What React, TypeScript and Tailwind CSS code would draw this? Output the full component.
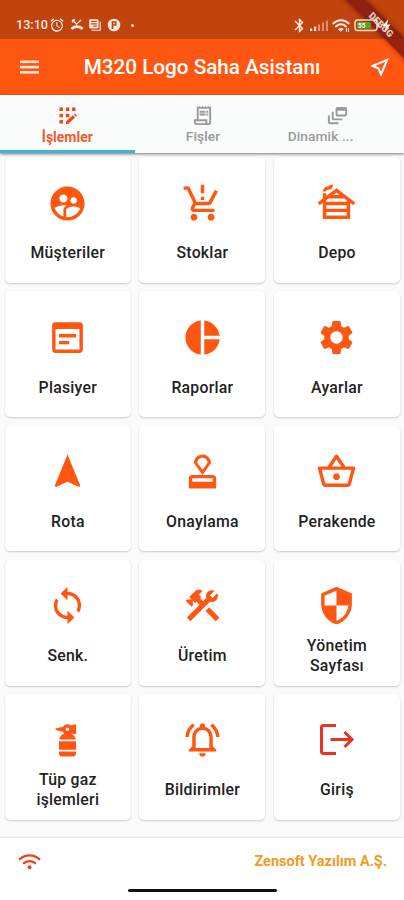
import React, { ReactNode } from 'react';
import {
  MdSupervisedUserCircle,
  MdProductionQuantityLimits,
  MdOutlineCabin,
  MdWysiwyg,
  MdPieChart,
  MdSettings,
  MdNavigation,
  MdOutlineApproval,
  MdOutlineShoppingBasket,
  MdLoop,
  MdConstruction,
  MdSecurity,
  MdFireExtinguisher,
  MdOutlineNotificationsActive,
  MdOutlineReceiptLong,
  MdOutlineDynamicFeed,
  MdOutlineNearMe,
  MdAlarm,
  MdLibraryBooks,
  MdBluetooth,
} from 'react-icons/md';

const ITEMS: { label: string; icon: ReactNode }[] = [
  { label: 'Müşteriler', icon: <MdSupervisedUserCircle size={41} /> },
  { label: 'Stoklar', icon: <MdProductionQuantityLimits size={41} /> },
  { label: 'Depo', icon: <MdOutlineCabin size={41} /> },
  { label: 'Plasiyer', icon: <MdWysiwyg size={41} /> },
  { label: 'Raporlar', icon: <MdPieChart size={41} /> },
  { label: 'Ayarlar', icon: <MdSettings size={41} /> },
  { label: 'Rota', icon: <MdNavigation size={41} /> },
  { label: 'Onaylama', icon: <MdOutlineApproval size={41} /> },
  { label: 'Perakende', icon: <MdOutlineShoppingBasket size={41} /> },
  { label: 'Senk.', icon: <MdLoop size={41} /> },
  { label: 'Üretim', icon: <MdConstruction size={41} /> },
  { label: 'Yönetim Sayfası', icon: <MdSecurity size={41} /> },
  { label: 'Tüp gaz işlemleri', icon: <MdFireExtinguisher size={41} /> },
  { label: 'Bildirimler', icon: <MdOutlineNotificationsActive size={41} /> },
  { label: 'Giriş', icon: <ExitIcon /> },
];

export default function App() {
  return (
    <div className="relative w-[404px] h-[900px] flex flex-col overflow-hidden bg-[#fafafa] font-['Roboto',sans-serif]">
      <StatusBar />

      <header className="h-14 shrink-0 flex items-center bg-[#ff5611] text-white">
        <svg className="ml-5" width="19" height="14" viewBox="0 0 19 14" fill="#ffe3d6">
          <rect y="0.500" width="19" height="2.600" />
          <rect y="5.800" width="19" height="2.600" />
          <rect y="11" width="19" height="2.600" />
        </svg>
        <h1 className="flex-1 pr-[3px] pt-px text-center text-[20.7px] font-medium leading-none">M320 Logo Saha Asistanı</h1>
        <MdOutlineNearMe size={24} className="mr-3" />
      </header>

      <nav className="relative z-10 h-[58px] shrink-0 grid grid-cols-3 bg-[#fafbfb] shadow-[0_1px_3px_rgba(0,0,0,0.55)]">
        <Tab label="İşlemler" icon={<GridEditIcon />} active />
        <Tab label="Fişler" icon={<MdOutlineReceiptLong size={23} />} />
        <Tab label="Dinamik ..." icon={<MdOutlineDynamicFeed size={23} />} clipped />
      </nav>

      <main className="flex-1 grid grid-cols-3 auto-rows-[126px] content-start gap-x-[8.5px] gap-y-[8.2px] pl-[4.8px] pr-[4px] pt-1">
        {ITEMS.map((item) => (
          <button
            key={item.label}
            className="flex flex-col items-center rounded-[5px] bg-white pt-[25.7px] text-[#ff5611] shadow-[0_1px_2px_rgba(0,0,0,0.2)]"
          >
            {item.icon}
            <span className="mt-[4.5px] h-[50px] w-[86px] flex items-center justify-center text-center text-[15.8px] font-medium leading-[19.5px] tracking-[0.25px] text-[#222]">
              {item.label}
            </span>
          </button>
        ))}
      </main>

      <footer className="h-[62px] shrink-0 flex flex-col bg-white shadow-[0_-1px_2px_rgba(0,0,0,0.1)]">
        <div className="h-[47px] flex items-center justify-between pl-[18px] pr-[17px]">
          <svg width="23" height="18" viewBox="0 0 23 18" fill="none" stroke="#f0401c" strokeWidth="2.3" strokeLinecap="round">
            <path d="M1.8 6.2C7.4 1 15.600 1 21.200 6.200" />
            <path d="M6 10.200C9.200 7.500 13.800 7.500 17 10.200" />
            <circle cx="11.500" cy="14.300" r="2" fill="#f0401c" stroke="none" />
          </svg>
          <span className="text-[14.5px] font-bold text-[#f39a1d]">Zensoft Yazılım A.Ş.</span>
        </div>
        <div className="mx-auto mt-[3.5px] h-[3.5px] w-[149px] rounded-full bg-[#111]"></div>
      </footer>

      {/* debug banner across the corner */}
      <div className="absolute z-20 left-[316px] top-[18px] h-[14px] w-[130px] rotate-45 flex items-center justify-center bg-[#851b10]/85 shadow-[0_0_5px_rgba(80,10,0,0.6)]">
        <span className="text-[9.5px] font-black leading-none text-[#eee2dc]/90">DEBUG</span>
      </div>
    </div>
  );
}

function StatusBar() {
  return (
    <div className="h-[39px] shrink-0 flex items-center justify-between bg-[#c1440e] pt-[11px] pl-4 pr-[12px] text-[#ffe9e0]">
      <div className="flex items-center">
        <span className="w-[33px] text-[12.6px] font-medium leading-none">13:10</span>
        <MdAlarm size={16} />
        {/* missed call */}
        <svg className="ml-[5px]" width="14" height="12" viewBox="0 0 14 12" fill="none" stroke="currentColor">
          <path d="M2.500 1l4 4.200L11 1M2.500 1v2.600M2.500 1h2.600" strokeWidth="1.300" />
          <path d="M1.500 10C4 6.800 10 6.800 12.500 10" strokeWidth="2.600" />
        </svg>
        <MdLibraryBooks size={14} className="ml-[4px] -scale-x-100" />
        <svg className="ml-[5px]" width="14" height="14" viewBox="0 0 14 14">
          <circle cx="7" cy="7" r="6.300" fill="currentColor" />
          <path d="M5.500 11V4h3.200v3H6" fill="none" stroke="#c1440e" strokeWidth="1.700" />
        </svg>
        <span className="ml-[10px] size-[3px] rounded-full bg-[#ffd9c8]"></span>
      </div>

      <div className="relative z-30 flex items-center">
        <MdBluetooth size={17} />
        <svg className="ml-px mr-[2px]" width="20" height="13" viewBox="0 0 20 13" fill="currentColor">
          <rect x="1" y="9.500" width="2.200" height="2.500" />
          <rect x="5" y="7.500" width="2.200" height="4.500" />
          <rect x="9" y="5.500" width="2" height="6.500" opacity="0.5" />
          <rect x="13" y="3.500" width="2" height="8.500" opacity="0.45" />
          <rect x="17" y="1.500" width="2" height="10.500" opacity="0.45" />
        </svg>
        <svg className="ml-px" width="18" height="15" viewBox="0 0 18 15" fill="none" stroke="currentColor" strokeWidth="2" strokeLinecap="round">
          <path d="M1.300 5.500C5.500 1 12.500 1 16.700 5.500" />
          <path d="M4 8.500C6.800 5.600 11.200 5.600 14 8.500" />
          <path d="M6.800 11.200C8 10 10 10 11.200 11.200L9 13z" fill="currentColor" strokeWidth="1" />
          <path d="M14.500 10.500v3M16.500 10.500v3" strokeWidth="1" />
        </svg>
        <svg className="ml-[4px]" width="38" height="15" viewBox="0 0 38 15">
          <rect x="1" y="2" width="22" height="10.500" rx="2.800" fill="none" stroke="#f4dccf" strokeWidth="1.500" />
          <rect x="3" y="4" width="14" height="6.500" rx="1" fill="#53a51c" />
          <text x="4" y="9.700" fontSize="6.5" fontWeight="700" fill="#fff">55</text>
          <path d="M24.500 5.500v4" stroke="#f4dccf" strokeWidth="1.500" />
          <path d="M34.500 1l-6 7h3.500l-2 6 6.500-7.500H33z" fill="#fff" />
        </svg>
      </div>
    </div>
  );
}

function Tab({ label, icon, active, clipped }: { label: string; icon: ReactNode; active?: boolean; clipped?: boolean }) {
  return (
    <div
      className={`flex flex-col items-center border-b-[3px] pt-[9px] ${
        active ? 'border-[#3fb3dc] text-[#f15a29]' : 'border-transparent text-[#999] pl-[2px]'
      }`}
    >
      {icon}
      <span
        className={`mt-px ${active ? 'text-[14px] leading-[18px] font-bold' : 'text-[13.7px] leading-[17px] font-medium tracking-[0.1px]'} ${
          clipped ? 'pr-[34px]' : ''
        }`}
      >
        {label}
      </span>
    </div>
  );
}

function GridEditIcon() {
  return (
    <svg width="23" height="23" viewBox="0 0 23 23" fill="#f0441c">
      <rect x="3.500" y="3.500" width="3.500" height="3.500" />
      <rect x="9.800" y="3.500" width="3.500" height="3.500" />
      <rect x="16.100" y="3.500" width="3.500" height="3.500" />
      <rect x="3.500" y="9.800" width="3.500" height="3.500" />
      <rect x="9.800" y="9.800" width="3.500" height="3.500" />
      <rect x="3.500" y="16.100" width="3.500" height="3.500" />
      <path d="M10 20v-2.400l6.800-6.400 2.200 2.300-6.800 6.500zM17.700 10.400l1.100-1 2.200 2.200-1.100 1.100z" />
    </svg>
  );
}

function ExitIcon() {
  return (
    <svg width="41" height="41" viewBox="0 0 41 41" fill="none" stroke="#e93323" strokeWidth="3">
      <path d="M20 6.500H7.500a2 2 0 0 0-2 2v24a2 2 0 0 0 2 2H20" />
      <path d="M14.500 20.500H36M28.500 13l7.500 7.500-7.500 7.500" />
    </svg>
  );
}
